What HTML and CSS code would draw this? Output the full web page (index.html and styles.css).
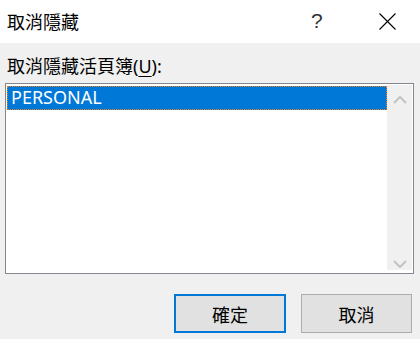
FILE: index.html
```html
<!DOCTYPE html>
<html lang="zh-Hant">
  <head>
    <meta charset="UTF-8" />
    <meta name="viewport" content="width=device-width, initial-scale=1.0" />
    <link rel="stylesheet" href="styles.css">
    <title>取消隱藏</title>
  </head>
  <body>
    <div class="dialog">
      <div class="titlebar">
        <span class="title">取消隱藏</span>
        <span class="help">?</span>
        <span class="close">
          <svg width="17" height="17" viewBox="0 0 17 17">
            <path d="M0.5 0.5 L16.5 16.5 M16.5 0.5 L0.5 16.5" stroke="#000" stroke-width="1.1" fill="none" />
          </svg>
        </span>
      </div>

      <div class="content">
        <label class="field-label" for="sheets">取消隱藏活頁簿(<u>U</u>):</label>
        <div class="listbox" id="sheets">
          <ul class="items">
            <li class="selected">PERSONAL</li>
          </ul>
          <div class="scrollbar">
            <svg class="arrow up" width="14" height="8" viewBox="0 0 14 8">
              <path d="M1 7 L7 1 L13 7" stroke="#c2c2c2" stroke-width="2" fill="none" />
            </svg>
            <svg class="arrow down" width="14" height="8" viewBox="0 0 14 8">
              <path d="M1 1 L7 7 L13 1" stroke="#c2c2c2" stroke-width="2" fill="none" />
            </svg>
          </div>
        </div>

        <div class="buttons">
          <button class="btn default">確定</button>
          <button class="btn">取消</button>
        </div>
      </div>
    </div>
  </body>
</html>
```

FILE: styles.css
```css
/* Dialog */
html,
body {
  margin: 0;
  padding: 0;
  background: #f0f0f0;
}
.dialog {
  width: 420px;
  height: 339px;
  font-family: "Noto Sans", "Noto Sans CJK TC", sans-serif;
  font-size: 18px;
  color: #000;
}

/* Title bar */
.titlebar {
  display: flex;
  align-items: center;
  height: 43px;
  background: #fff;
}
.title {
  flex: 1;
  padding: 0 0 2px 7px;
}
.help {
  width: 12px;
  margin-right: 56px;
  padding-bottom: 1px;
  font-family: "Liberation Sans", sans-serif;
  font-size: 21px;
  line-height: 24px;
  color: #333;
}
.close {
  display: flex;
  width: 17px;
  height: 17px;
  margin-right: 24px;
}

/* Content */
.content {
  padding: 11px 6px 0 5px;
}
.field-label {
  display: block;
  line-height: 24px;
  padding-left: 2px;
  margin: 0 0 5px;
}
.field-label u {
  text-underline-offset: 3px;
}

/* List box */
.listbox {
  display: flex;
  height: 187px;
  border: 1px solid #828790;
  padding: 1px;
  background: #fff;
}
.items {
  flex: 1;
  margin: 0;
  padding: 1px 0 0;
  list-style: none;
}
.items li {
  height: 24px;
  line-height: 23px;
  padding: 0 4px;
  box-sizing: border-box;
}
.items li.selected {
  background: #0078d7;
  color: #fff;
  outline: 1px dotted #f07a1d;
  outline-offset: -1px;
}
.scrollbar {
  display: flex;
  flex-direction: column;
  justify-content: space-between;
  align-items: center;
  width: 25px;
  margin-bottom: 2px;
  background: #f0f0f0;
}
.arrow.up {
  margin-top: 11px;
}
.arrow.down {
  margin-bottom: 2px;
}

/* Buttons */
.buttons {
  display: flex;
  justify-content: flex-end;
  gap: 15px;
  margin-top: 20px;
  padding-right: 2px;
}
.btn {
  width: 111px;
  height: 39px;
  margin: 0;
  padding: 0;
  border: 1px solid #adadad;
  background: #e1e1e1;
  font-family: "Noto Sans", "Noto Sans CJK TC", sans-serif;
  font-size: 18px;
  color: #000;
}
.btn.default {
  width: 112px;
  border: 2px solid #0078d7;
}
```
